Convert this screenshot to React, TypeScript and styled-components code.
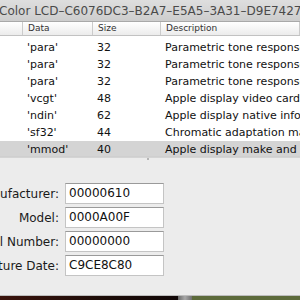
import styled, { createGlobalStyle } from "styled-components";

const GlobalStyle = createGlobalStyle`
  html, body {
    margin: 0;
    padding: 0;
    width: 300px;
    height: 300px;
    overflow: hidden;
    font-family: "DejaVu Sans", "Liberation Sans", sans-serif;
  }
`;

type Tag = { sig: string; size: number; desc: string };

const tags: Tag[] = [
  { sig: "'para'", size: 32, desc: "Parametric tone response curve" },
  { sig: "'para'", size: 32, desc: "Parametric tone response curve" },
  { sig: "'para'", size: 32, desc: "Parametric tone response curve" },
  { sig: "'vcgt'", size: 48, desc: "Apple display video card gamma" },
  { sig: "'ndin'", size: 62, desc: "Apple display native information" },
  { sig: "'sf32'", size: 44, desc: "Chromatic adaptation matrix" },
  { sig: "'mmod'", size: 40, desc: "Apple display make and model" },
];

const fields = [
  { label: "Manufacturer:", value: "00000610" },
  { label: "Model:", value: "0000A00F" },
  { label: "Serial Number:", value: "00000000" },
  { label: "Manufacture Date:", value: "C9CE8C80" },
];

const App = () => {
  return (
    <>
      <GlobalStyle />
      <Screen>
        <Window>
          <TitleBar>
            <Title>Color LCD–C6076DC3–B2A7–E5A5–3A31–D9E7427CF4B1</Title>
          </TitleBar>
          <Header>
            <HeadCell $w={23} />
            <HeadCell $w={70}>Data</HeadCell>
            <HeadCell $w={68}>Size</HeadCell>
            <HeadCell>Description</HeadCell>
          </Header>
          <Body>
            {tags.map((t, i) => (
              <Row key={i} $selected={i === tags.length - 1}>
                <Cell $w={23} />
                <Cell $w={70}>{t.sig}</Cell>
                <Cell $w={68}>{t.size}</Cell>
                <Cell>{t.desc}</Cell>
              </Row>
            ))}
          </Body>
          <Panel>
            <Grip />
            {fields.map((f) => (
              <FieldRow key={f.label}>
                <Label>
                  <span>{f.label}</span>
                </Label>
                <Input>{f.value}</Input>
              </FieldRow>
            ))}
          </Panel>
        </Window>
        <Desktop>
          <DarkPart />
          <DockPart />
          <GreenPart />
        </Desktop>
      </Screen>
    </>
  );
};

export default App;

const Screen = styled.div`
  width: 300px;
  height: 300px;
  display: flex;
  flex-direction: column;
  overflow: hidden;
`;

const Window = styled.div`
  height: 295px;
  display: flex;
  flex-direction: column;
  background: #ececec;
`;

const TitleBar = styled.div`
  height: 21px;
  border-bottom: 1px solid #a9a9a9;
  background: linear-gradient(#dedede, #cdcdcd);
  display: flex;
  align-items: center;
  overflow: hidden;
`;

const Title = styled.span`
  margin-left: -1px;
  font-size: 12px;
  color: #4a4a4a;
  white-space: nowrap;
`;

const Header = styled.div`
  height: 13px;
  display: flex;
  border-bottom: 1px solid #c2c2c2;
  background: linear-gradient(#ffffff, #ececec);
`;

const HeadCell = styled.div<{ $w?: number }>`
  ${({ $w }) => ($w ? `width: ${$w}px;` : "flex: 1;")}
  box-sizing: border-box;
  border-right: 1px solid #cbcbcb;
  padding-left: 5px;
  font-size: 9px;
  line-height: 13px;
  color: #333;
  white-space: nowrap;
  overflow: hidden;
`;

const Body = styled.div`
  background: #fff;
  padding-top: 3px;
  height: 120px;
  box-sizing: border-box;
  display: flex;
  flex-direction: column;
`;

const Row = styled.div<{ $selected?: boolean }>`
  height: 17px;
  flex: none;
  display: flex;
  align-items: center;
  background: ${({ $selected }) => ($selected ? "#d4d4d4" : "transparent")};
`;

const Cell = styled.div<{ $w?: number }>`
  ${({ $w }) => ($w ? `width: ${$w}px;` : "flex: 1;")}
  box-sizing: border-box;
  padding-left: 4px;
  font-size: 11px;
  color: #111;
  white-space: nowrap;
  overflow: hidden;
`;

const Panel = styled.div`
  position: relative;
  flex: 1;
  border-top: 1px solid #cfcfcf;
  padding-top: 26px;
  display: flex;
  flex-direction: column;
  gap: 3px;
`;

const Grip = styled.div`
  position: absolute;
  left: 147px;
  top: 1px;
  width: 2px;
  height: 2px;
  background: #b5b5b5;
`;

const FieldRow = styled.div`
  display: flex;
  align-items: center;
  gap: 6px;
`;

const Label = styled.div`
  width: 59px;
  flex: none;
  display: flex;
  justify-content: flex-end;
  white-space: nowrap;
  overflow: hidden;
  font-size: 12px;
  color: #1a1a1a;

  span {
    flex: none;
  }
`;

const Input = styled.div`
  width: 99px;
  height: 21px;
  box-sizing: border-box;
  background: #fff;
  border: 1px solid #c4c4c4;
  border-top-color: #9a9a9a;
  padding-left: 3px;
  font-size: 12px;
  line-height: 19px;
  color: #111;
`;

const Desktop = styled.div`
  flex: 1;
  display: flex;
  border-top: 1px solid #bdbdbd;
`;

const DarkPart = styled.div`
  width: 178px;
  background: linear-gradient(90deg, #3a130c, #1c0c08 60%, #120808);
`;

const DockPart = styled.div`
  width: 14px;
  background: linear-gradient(90deg, #6a6a6a, #a8a8a8 50%, #6e6e6e);
`;

const GreenPart = styled.div`
  flex: 1;
  background: #5c6a3a;
`;
